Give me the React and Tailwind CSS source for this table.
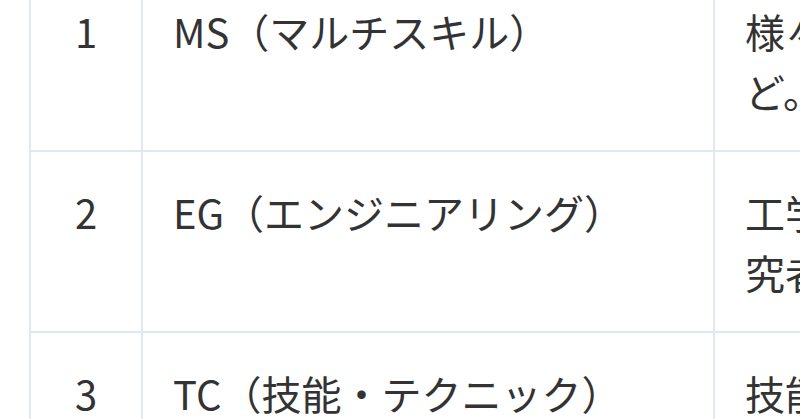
export default function App() {
  const rows = [
    { no: "1", name: "MS（マルチスキル）", desc: ["様々な分野のスキルを持つ人材な", "ど。"] },
    { no: "2", name: "EG（エンジニアリング）", desc: ["工学系の専門知識を持つ技術者や研", "究者など。"] },
    { no: "3", name: "TC（技能・テクニック）", desc: ["技能やテクニックを持つ職人など。"] },
  ];
  return (
    <div
      className="w-[800px] h-[419px] overflow-hidden bg-white text-[#333]"
      style={{ fontFamily: '"Noto Sans CJK JP", "Noto Sans", sans-serif' }}
    >
      <table className="ml-[29px] mt-[-31px] border-separate border-spacing-0 border-l-2 border-t-2 border-[#e2e8f0] text-[40px] leading-[60px]">
        <tbody>
          {rows.map((r) => (
            <tr key={r.no}>
              <td className="w-[112px] min-w-[112px] align-top text-center pt-[30px] pb-[29px] border-r-2 border-b-2 border-[#e2e8f0]">
                {r.no}
              </td>
              <td className="w-[572px] min-w-[572px] align-top pl-[30px] pt-[30px] pb-[29px] whitespace-nowrap border-r-2 border-b-2 border-[#e2e8f0]">
                {r.name}
              </td>
              <td className="min-w-[700px] align-top pl-[30px] pr-[30px] pt-[30px] pb-[29px] whitespace-nowrap border-r-2 border-b-2 border-[#e2e8f0]">
                {r.desc.map((d, i) => (
                  <div key={i}>{d}</div>
                ))}
              </td>
            </tr>
          ))}
        </tbody>
      </table>
    </div>
  );
}
